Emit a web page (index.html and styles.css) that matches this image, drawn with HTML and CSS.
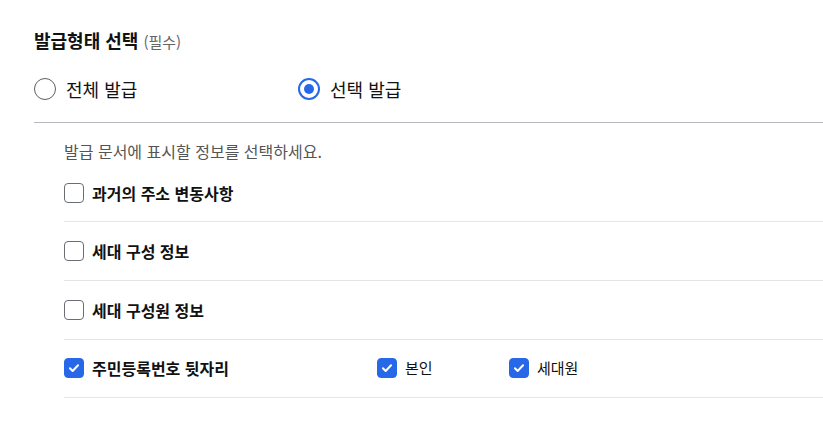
FILE: index.html
```html
<!DOCTYPE html>
<html lang="ko">
<head>
<meta charset="utf-8">
<link rel="stylesheet" href="styles.css">
</head>
<body>
<section class="panel">
  <h2 class="title">발급형태 선택 <span class="req">(필수)</span></h2>
  <div class="radios">
    <label class="radio"><span class="circle"></span><span class="rlabel">전체 발급</span></label>
    <label class="radio"><span class="circle on"></span><span class="rlabel">선택 발급</span></label>
  </div>
  <div class="divider"></div>
  <div class="options">
    <p class="desc">발급 문서에 표시할 정보를 선택하세요.</p>
    <ul class="list">
      <li class="row"><span class="main"><span class="box"></span><span class="blabel">과거의 주소 변동사항</span></span></li>
      <li class="row"><span class="main"><span class="box"></span><span class="blabel">세대 구성 정보</span></span></li>
      <li class="row"><span class="main"><span class="box"></span><span class="blabel">세대 구성원 정보</span></span></li>
      <li class="row">
        <span class="main"><span class="box checked"><svg viewBox="0 0 20 20"><path d="M5.5 10.3l3 3 6-6.3" /></svg></span><span class="blabel">주민등록번호 뒷자리</span></span>
        <span class="sub"><span class="box checked"><svg viewBox="0 0 20 20"><path d="M5.5 10.3l3 3 6-6.3" /></svg></span><span class="slabel">본인</span></span>
        <span class="sub"><span class="box checked"><svg viewBox="0 0 20 20"><path d="M5.5 10.3l3 3 6-6.3" /></svg></span><span class="slabel">세대원</span></span>
      </li>
    </ul>
  </div>
</section>
</body>
</html>
```
FILE: styles.css
```css
* { box-sizing: border-box; }
html, body { margin: 0; background: #fff; }
body {
  font-family: "Noto Sans CJK KR", "Noto Sans", sans-serif;
  color: #111;
}
.panel { padding: 28px 0 0 34px; }
.title {
  margin: 0;
  height: 24px;
  font-size: 18px;
  line-height: 24px;
  font-weight: 700;
  color: #111;
}
.req {
  font-size: 15px;
  line-height: 1;
  font-weight: 400;
  color: #666;
}
.radios {
  display: grid;
  grid-template-columns: 264px 264px;
  margin-top: 24px;
  height: 26px;
}
.radio {
  display: flex;
  align-items: center;
  gap: 10px;
}
.circle {
  width: 22px;
  height: 22px;
  border-radius: 50%;
  border: 1.5px solid #5c5f63;
  display: flex;
  align-items: center;
  justify-content: center;
}
.circle.on { border: 2px solid #2768e8; }
.circle.on::after {
  content: "";
  width: 10px;
  height: 10px;
  border-radius: 50%;
  background: #2768e8;
}
.rlabel { font-size: 18px; line-height: 26px; color: #111; }
.divider {
  margin-top: 20px;
  height: 1px;
  background: #b6babf;
}
.options { padding-left: 30px; }
.desc {
  margin: 0;
  padding: 17.5px 0 2.4px;
  font-size: 16px;
  line-height: 21px;
  color: #555;
}
.list { list-style: none; margin: 0; padding: 0; }
.row {
  display: flex;
  align-items: center;
  padding: 18.8px 0;
  border-bottom: 1px solid #e3e5e9;
}
.main { display: flex; align-items: center; gap: 8px; width: 313px; }
.sub { display: flex; align-items: center; gap: 8px; width: 132px; }
.box {
  width: 20px;
  height: 20px;
  flex: none;
  border: 1.5px solid #6a6d71;
  border-radius: 4px;
  display: flex;
  align-items: center;
  justify-content: center;
}
.box.checked { background: #2768e8; border-color: #2768e8; }
.box svg { width: 20px; height: 20px; fill: none; stroke: #fff; stroke-width: 2.2; stroke-linecap: round; stroke-linejoin: round; }
.blabel { font-size: 16px; line-height: 20px; font-weight: 700; color: #111; }
.slabel { font-size: 15px; line-height: 20px; color: #111; }
```
